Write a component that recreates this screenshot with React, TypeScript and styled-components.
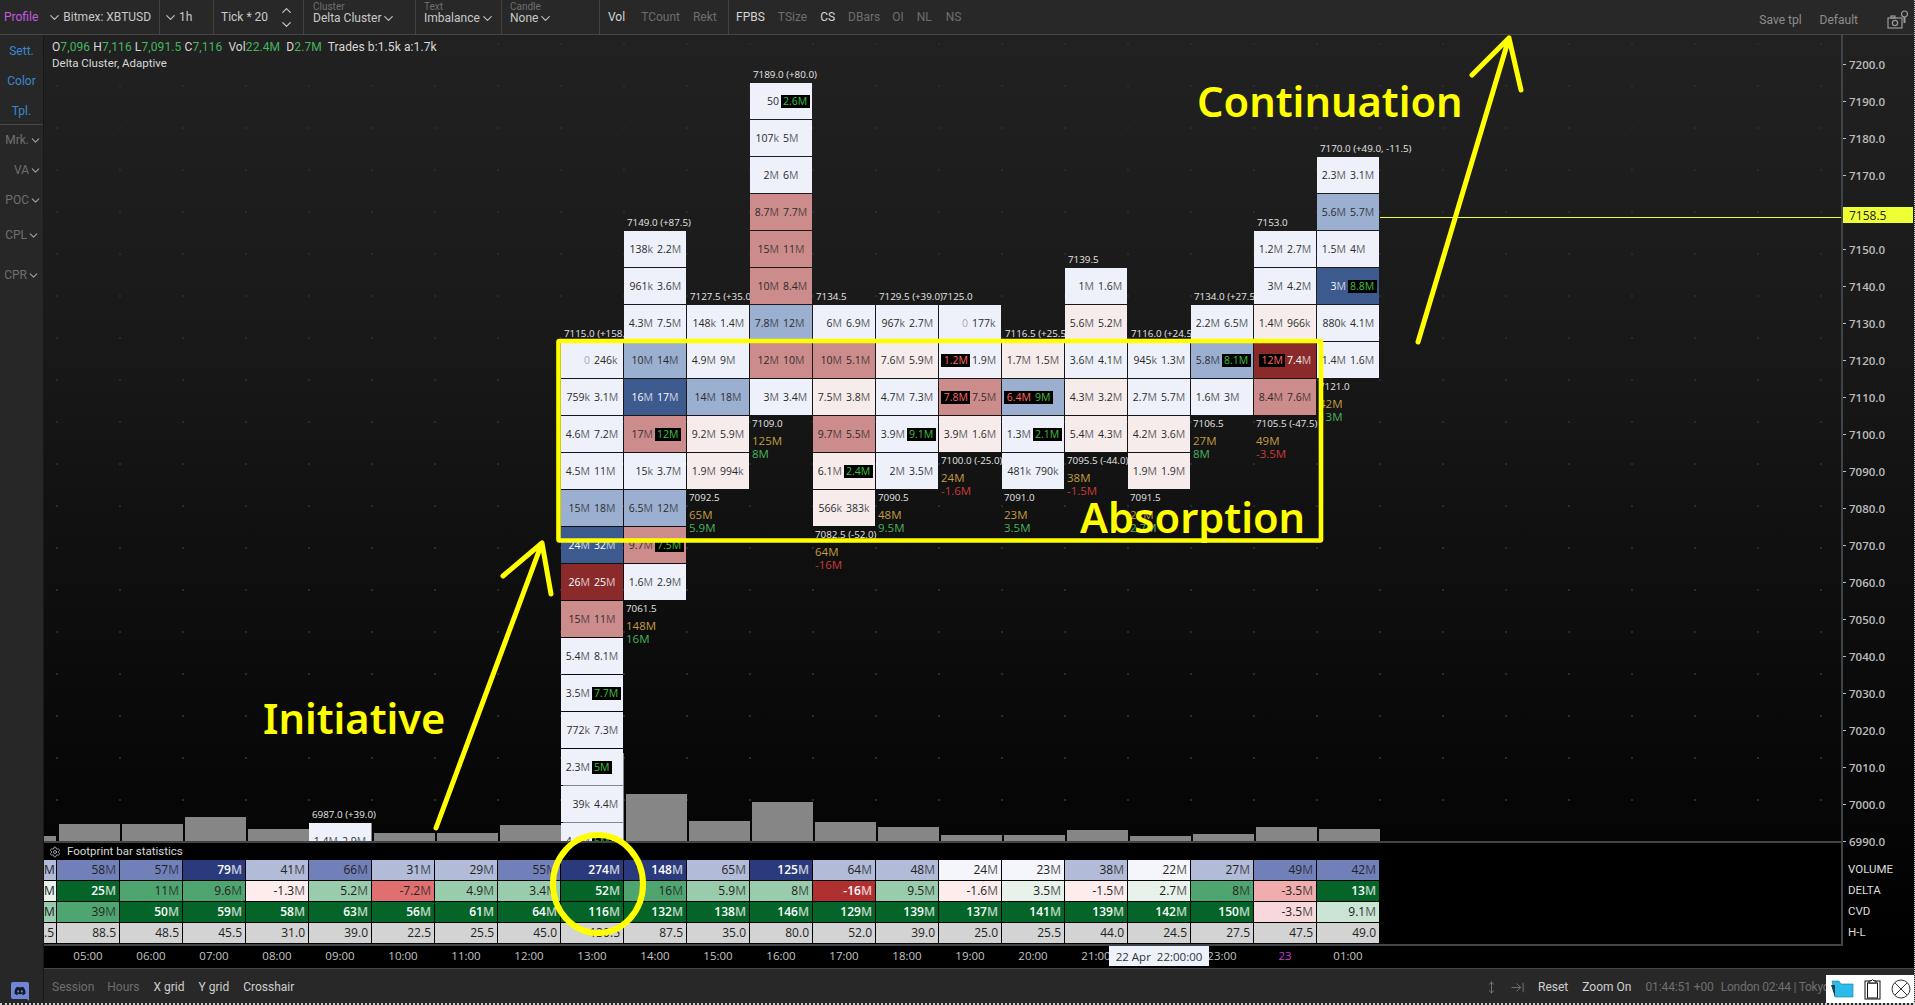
import React from "react";
import styled, { createGlobalStyle } from "styled-components";
import { ChevronDown, ChevronUp, Settings, MoveVertical, ArrowRightToLine } from "lucide-react";
import { FaDiscord } from "react-icons/fa";

const Global = createGlobalStyle`
  html, body { margin: 0; padding: 0; background: #000; }
  * { box-sizing: border-box; }
  #root { width: 1915px; height: 1005px; overflow: hidden; }
`;

const UI = `Roboto, "Liberation Sans", sans-serif`;
const CELL = `"Open Sans", "Noto Sans", sans-serif`;
const LINE = "#3e4448";

const Page = styled.div`
  position: relative;
  width: 1915px;
  height: 1005px;
  display: grid;
  grid-template-columns: 44px 1fr;
  grid-template-rows: 35px 933px 35px;
  border-right: 1px dotted #cfcfcf;
  border-bottom: 2px dotted #cfcfcf;
  background: #272727;
  font-family: ${UI};
  overflow: hidden;
`;

/* ---------- top bar ---------- */
const TopBar = styled.header`
  grid-column: 1 / 3;
  display: flex;
  background: #282828;
  border-bottom: 1px solid #474747;
  font-size: 12px;
  color: #c9c9c9;
`;
const Group = styled.div<{ $w: number; $gap?: number; $pad?: number; $plain?: boolean }>`
  width: ${(p) => p.$w}px;
  flex: none;
  display: flex;
  align-items: center;
  gap: ${(p) => p.$gap ?? 0}px;
  padding-left: ${(p) => p.$pad ?? 0}px;
  border-right: 1px solid ${(p) => (p.$plain ? "transparent" : "#424242")};
`;
const Profile = styled.span`
  color: #c65be0;
  margin-right: 9px;
`;
const DropMark = styled(ChevronDown)`
  flex: none;
  width: 15px;
  height: 15px;
  stroke-width: 1.9;
  color: #bdbdbd;
`;
const Spaced = styled.span`
  margin-left: 1px;
`;
const Stepper = styled.div`
  display: flex;
  flex-direction: column;
  margin-left: 11px;
  gap: 0;
  color: #c9c9c9;
  & > svg { margin: -0.5px 0; }
`;
const Stack = styled.div`
  display: flex;
  flex-direction: column;
  align-self: flex-start;
  padding-top: 3px;
`;
const StackCaption = styled.span`
  font-size: 10px;
  line-height: 8px;
  color: #6f6f6f;
`;
const StackValue = styled.span`
  display: flex;
  align-items: center;
  line-height: 13px;
`;
const Toggle = styled.span<{ $on?: boolean; $gap?: number }>`
  color: ${(p) => (p.$on ? "#d5d5d5" : "#6e6e6e")};
  margin-right: ${(p) => p.$gap ?? 0}px;
`;
const BarRight = styled.div`
  margin-left: auto;
  display: flex;
  align-items: center;
  padding: 6px 5px 0 0;
  color: #8d8d8d;
`;
const SaveTpl = styled.span`
  margin-right: 18px;
`;
const DefaultTpl = styled.span`
  margin-right: 29px;
`;

/* ---------- side bar ---------- */
const SideBar = styled.aside`
  grid-row: 2 / 4;
  display: flex;
  flex-direction: column;
  align-items: stretch;
  position: relative;
  padding-top: 1px;
  background: #272727;
  border-right: 1px solid #171717;
  font-size: 12px;
`;
const SideBlue = styled.div`
  height: 30px;
  line-height: 30px;
  text-align: center;
  color: #3b88d4;
`;
const SideRule = styled.div`
  height: 1px;
  background: #474747;
  margin-top: -2px;
`;
const SideMenu = styled.div<{ $h: number; $pr?: number }>`
  height: ${(p) => p.$h}px;
  display: flex;
  align-items: center;
  justify-content: flex-end;
  padding-right: ${(p) => p.$pr ?? 0}px;
  color: #6f6f6f;
`;
const SmallDrop = styled(ChevronDown)`
  width: 13px;
  height: 13px;
  stroke-width: 2;
  color: #a0a0a0;
`;
const DiscordTile = styled.div`
  position: absolute;
  left: 11px;
  bottom: 4px;
  width: 18px;
  height: 17px;
  border-radius: 2px;
  background: #6f86d6;
  display: flex;
  align-items: center;
  justify-content: center;
  color: #141820;
  &::after {
    content: "";
    position: absolute;
    right: 0;
    bottom: -2px;
    border-top: 3px solid #6f86d6;
    border-left: 3px solid transparent;
  }
`;

/* ---------- workspace ---------- */
const Workspace = styled.main`
  display: flex;
  flex-direction: column;
  background: #000;
  min-width: 0;
`;
const MainRow = styled.div`
  display: flex;
  height: 911px;
  background: linear-gradient(#212121 0%, #1a1a1a 30%, #101010 56%, #050505 88%, #000 100%);
`;
const PlotColumn = styled.div`
  width: 1799px;
  flex: none;
  display: flex;
  flex-direction: column;
  border-right: 2px solid ${LINE};
  border-bottom: 2px solid ${LINE};
`;
const Plot = styled.div`
  position: relative;
  height: 806px;
  overflow: hidden;
  background-image: radial-gradient(circle at 1px 1px, #2b2b2b 0, #2b2b2b 1px, transparent 1.2px);
  background-size: 63px 42px;
  background-position: 12px 8px;
`;
const Legend = styled.div`
  position: absolute;
  left: 8px;
  top: 4px;
  z-index: 3;
  color: #d8d8d8;
`;
const LegendLine = styled.div`
  font-size: 12px;
  line-height: 16px;
  letter-spacing: 0.1px;
  white-space: pre;
`;
const Up = styled.span`
  color: #46b35f;
`;
const LegendSub = styled.div`
  font-size: 11.5px;
  line-height: 16px;
`;
const VolumeLayer = styled.div`
  position: absolute;
  left: 0;
  bottom: 0;
  display: flex;
  align-items: flex-end;
  gap: 2px;
`;
const VolumeBar = styled.div<{ $h: number; $w?: number }>`
  width: ${(p) => p.$w ?? 61}px;
  height: ${(p) => p.$h}px;
  background: #868686;
  flex: none;
  margin-right: ${(p) => (p.$w ? 1 : 0)}px;
`;
const Foot = styled.div`
  position: relative;
  display: grid;
  grid-template-columns: repeat(22, 63px);
  grid-template-rows: repeat(22, 37px);
  padding: 11px 0 0 13px;
  font-family: ${CELL};
`;
const TONES: Record<string, { bg: string; fg: string }> = {
  w: { bg: "#eef1f9", fg: "#2a2a2a" },
  p: { bg: "#f7ecec", fg: "#2a2a2a" },
  r: { bg: "#cd8c8c", fg: "#2a2a2a" },
  b: { bg: "#9bafd1", fg: "#2a2a2a" },
  B: { bg: "#3d5a8e", fg: "#ffffff" },
  R: { bg: "#8a2a2a", fg: "#ffffff" },
};
const Cell = styled.div<{ $c: number; $r: number; $t: string }>`
  grid-column: ${(p) => p.$c};
  grid-row: ${(p) => p.$r};
  width: 62px;
  height: 36px;
  display: grid;
  grid-template-columns: 1fr 1fr;
  column-gap: 2px;
  align-items: center;
  background: ${(p) => TONES[p.$t].bg};
  color: ${(p) => TONES[p.$t].fg};
  font-size: 10.5px;
  white-space: nowrap;
`;
const SideL = styled.div`
  justify-self: end;
  display: flex;
`;
const SideR = styled.div`
  justify-self: start;
  display: flex;
`;
const Plain = styled.span<{ $zero?: boolean }>`
  padding: 0 1px;
  color: ${(p) => (p.$zero ? "#a9a9a9" : "inherit")};
`;
const Imb = styled.span<{ $red?: boolean }>`
  background: #000;
  color: ${(p) => (p.$red ? "#ff6a62" : "#3fc13f")};
  line-height: 13px;
  margin: 0 -1px;
  padding: ${(p) => (p.$red ? "0 2px 0 3px" : "0 3px 0 2px")};
`;
const TopLabel = styled.div<{ $c: number; $r: number }>`
  grid-column: ${(p) => p.$c};
  grid-row: ${(p) => p.$r};
  align-self: end;
  min-width: 0;
  padding: 0 0 1px 3px;
  color: #e6e6e6;
  font-size: 9.8px;
  line-height: 15px;
  white-space: nowrap;
`;
const FootStat = styled.div<{ $c: number; $r: number }>`
  grid-column: ${(p) => p.$c};
  grid-row: ${(p) => p.$r} / span 2;
  min-width: 0;
  padding-left: 2px;
  white-space: nowrap;
`;
const FootPrice = styled.div`
  color: #e6e6e6;
  font-size: 9.8px;
  line-height: 15px;
  margin-bottom: 3px;
`;
const FootVol = styled.div`
  color: #c29c3e;
  font-size: 11.5px;
  line-height: 13px;
`;
const FootDelta = styled.div<{ $neg: boolean }>`
  color: ${(p) => (p.$neg ? "#c93a3a" : "#47b35d")};
  font-size: 11.5px;
  line-height: 13px;
`;
const PriceLine = styled.div`
  position: absolute;
  left: 1336px;
  right: 0;
  top: 182px;
  height: 1px;
  background: #eeff33;
`;

/* ---------- statistics ---------- */
const StatsHeader = styled.div`
  height: 17px;
  border-top: 2px solid ${LINE};
  box-sizing: content-box;
  background: #000;
  display: flex;
  align-items: center;
  gap: 6px;
  padding-left: 5px;
  color: #d8d8d8;
  font-size: 11.5px;
`;
const StatsHeaderInner = styled.span`
  line-height: 15px;
`;
const Gear = styled(Settings)`
  width: 12px;
  height: 12px;
  stroke-width: 1.6;
  color: #c0c0c0;
`;
const StatsTable = styled.div`
  height: 84px;
  background: #000;
  display: grid;
  grid-template-columns: 12px repeat(21, 62px);
  grid-template-rows: repeat(4, 20px);
  gap: 1px;
  grid-auto-flow: column;
  font-family: ${CELL};
  font-size: 12px;
`;
const STAT: Record<string, { bg: string; fg: string }> = {
  a: { bg: "#f5f6fb", fg: "#222" },
  b: { bg: "#b2bbd8", fg: "#222" },
  c: { bg: "#7180b9", fg: "#222" },
  d: { bg: "#2a3a7c", fg: "#fff" },
  e: { bg: "#e6f2ea", fg: "#222" },
  f: { bg: "#cbe5d5", fg: "#222" },
  g: { bg: "#99ccac", fg: "#222" },
  h: { bg: "#4fa56f", fg: "#222" },
  i: { bg: "#056529", fg: "#fff" },
  j: { bg: "#fcecec", fg: "#222" },
  k: { bg: "#f7d9dc", fg: "#222" },
  l: { bg: "#f0adad", fg: "#222" },
  m: { bg: "#e07070", fg: "#222" },
  n: { bg: "#b03030", fg: "#fff" },
  z: { bg: "#d3d3d3", fg: "#222" },
};
const StatCell = styled.div<{ $k: string }>`
  background: ${(p) => STAT[p.$k].bg};
  color: ${(p) => STAT[p.$k].fg};
  font-weight: ${(p) => (STAT[p.$k].fg === "#fff" ? 600 : 400)};
  text-align: right;
  padding-right: 3px;
  line-height: 20px;
  overflow: hidden;
  white-space: nowrap;
`;
const Unit = styled.span`
  opacity: 0.72;
`;

/* ---------- axis ---------- */
const Axis = styled.div`
  flex: 1;
  position: relative;
  display: flex;
  flex-direction: column;
  color: #bcbcbc;
`;
const Ticks = styled.div`
  padding-top: 11px;
  height: 825px;
  flex: none;
`;
const Tick = styled.div`
  height: 37px;
  display: flex;
  align-items: center;
  gap: 3px;
  font-family: ${CELL};
  font-size: 11.5px;
  font-weight: 600;
  &::before {
    content: "";
    width: 3px;
    height: 1px;
    background: #bcbcbc;
  }
`;
const Badge = styled.div`
  position: absolute;
  left: 0;
  right: 1px;
  top: 172px;
  height: 16px;
  display: flex;
  align-items: center;
  padding-left: 6px;
  background: #eeff33;
  color: #222;
  font-family: ${CELL};
  font-size: 12px;
`;
const AxisStat = styled.div`
  height: 21px;
  line-height: 19px;
  padding-left: 5px;
  color: #dcdcdc;
  font-size: 11.5px;
`;

/* ---------- time row and footer ---------- */
const TimeRow = styled.div`
  position: relative;
  height: 22px;
  display: grid;
  grid-template-columns: repeat(22, 63px);
  padding-left: 13px;
  background: #000;
  font-family: ${CELL};
  font-size: 11.5px;
  line-height: 20px;
  color: #c4c4c4;
  text-align: center;
`;
const TimeLabel = styled.span<{ $day?: boolean }>`
  width: 62px;
  color: ${(p) => (p.$day ? "#c03fd6" : "inherit")};
`;
const Crosshair = styled.div`
  position: absolute;
  left: 1065px;
  top: 0;
  width: 100px;
  height: 20px;
  background: #edf2fb;
  color: #333;
  line-height: 21px;
  white-space: pre;
`;
const Footer = styled.footer`
  position: relative;
  display: flex;
  align-items: center;
  padding: 2px 0 0 8px;
  background: #282828;
  border-top: 1px solid #454545;
  font-size: 12px;
  color: #cfcfcf;
`;
const FooterToggle = styled.span<{ $off?: boolean; $gap: number }>`
  margin-right: ${(p) => p.$gap}px;
  color: ${(p) => (p.$off ? "#6e6e6e" : "#cfcfcf")};
`;
const FooterRight = styled.div`
  position: absolute;
  left: 1441px;
  top: 1px;
  height: 100%;
  display: flex;
  align-items: center;
  white-space: nowrap;
`;
const FootIconUp = styled(MoveVertical)`
  width: 13px;
  height: 17px;
  stroke-width: 1.4;
  color: #8c8c8c;
  margin-right: 12px;
`;
const FootIconEnd = styled(ArrowRightToLine)`
  width: 15px;
  height: 15px;
  stroke-width: 1.4;
  color: #7a7a7a;
  margin-right: 13px;
`;
const FootClock = styled.span`
  color: #6f6f6f;
  margin-right: 7px;
  letter-spacing: -0.1px;
`;
const FootWorld = styled.span`
  color: #6f6f6f;
  letter-spacing: -0.25px;
`;
const Gap = styled.span<{ $w: number }>`
  margin-right: ${(p) => p.$w}px;
`;
const Tray = styled.div`
  position: absolute;
  right: 0;
  top: 6px;
  bottom: -2px;
  width: 88px;
  background: #fff;
  display: flex;
  align-items: center;
  padding: 0 3px 2px 4px;
  justify-content: space-between;
`;

/* ---------- annotations ---------- */
const Marks = styled.svg`
  position: absolute;
  left: 0;
  top: 0;
  width: 1915px;
  height: 1005px;
  pointer-events: none;
  z-index: 5;
`;
const Note = styled.div<{ $x: number; $y: number }>`
  position: absolute;
  left: ${(p) => p.$x}px;
  top: ${(p) => p.$y}px;
  z-index: 6;
  color: #ffff00;
  font-family: "Noto Sans", "Open Sans", sans-serif;
  font-weight: 600;
  font-size: 41.6px;
  line-height: 50px;
  white-space: nowrap;
`;

/* ---------- data ---------- */
type Col = { c: number; top: number; label: string; cells: string[]; foot?: [string, string, string] };
const COLS: Col[] = [
  { c: -4, top: 21, label: "6987.0 (+39.0)", cells: ["1.4M 2.9M|w"] },
  { c: 0, top: 8, label: "7115.0 (+158.5)", cells: ["0 246k|w", "759k 3.1M|w", "4.6M 7.2M|w", "4.5M 11M|w", "15M 18M|b", "24M 32M|B", "26M 25M|R", "15M 11M|r", "5.4M 8.1M|w", "3.5M !7.7M|w", "772k 7.3M|w", "2.3M !5M|w", "39k 4.4M|w", "4.1M !6M|w"] },
  { c: 1, top: 5, label: "7149.0 (+87.5)", cells: ["138k 2.2M|w", "961k 3.6M|w", "4.3M 7.5M|w", "10M 14M|b", "16M 17M|B", "17M !12M|r", "15k 3.7M|w", "6.5M 12M|b", "9.7M !7.5M|r", "1.6M 2.9M|w"], foot: ["7061.5", "148M", "16M"] },
  { c: 2, top: 7, label: "7127.5 (+35.0)", cells: ["148k 1.4M|w", "4.9M 9M|w", "14M 18M|b", "9.2M 5.9M|p", "1.9M 994k|p"], foot: ["7092.5", "65M", "5.9M"] },
  { c: 3, top: 1, label: "7189.0 (+80.0)", cells: ["50 !2.6M|w", "107k 5M|w", "2M 6M|w", "8.7M 7.7M|r", "15M 11M|r", "10M 8.4M|r", "7.8M 12M|b", "12M 10M|r", "3M 3.4M|w"], foot: ["7109.0", "125M", "8M"] },
  { c: 4, top: 7, label: "7134.5", cells: ["6M 6.9M|w", "10M 5.1M|r", "7.5M 3.8M|p", "9.7M 5.5M|r", "6.1M !2.4M|p", "566k 383k|p"], foot: ["7082.5 (-52.0)", "64M", "-16M"] },
  { c: 5, top: 7, label: "7129.5 (+39.0)", cells: ["967k 2.7M|w", "7.6M 5.9M|p", "4.7M 7.3M|w", "3.9M !9.1M|w", "2M 3.5M|w"], foot: ["7090.5", "48M", "9.5M"] },
  { c: 6, top: 7, label: "7125.0", cells: ["0 177k|w", "!1.2M 1.9M|w", "!7.8M 7.5M|r", "3.9M 1.6M|p"], foot: ["7100.0 (-25.0)", "24M", "-1.6M"] },
  { c: 7, top: 8, label: "7116.5 (+25.5)", cells: ["1.7M 1.5M|p", "!6.4M !9M|b", "1.3M !2.1M|w", "481k 790k|w"], foot: ["7091.0", "23M", "3.5M"] },
  { c: 8, top: 6, label: "7139.5", cells: ["1M 1.6M|w", "5.6M 5.2M|p", "3.6M 4.1M|w", "4.3M 3.2M|p", "5.4M 4.3M|p"], foot: ["7095.5 (-44.0)", "38M", "-1.5M"] },
  { c: 9, top: 8, label: "7116.0 (+24.5)", cells: ["945k 1.3M|w", "2.7M 5.7M|w", "4.2M 3.6M|p", "1.9M 1.9M|p"], foot: ["7091.5", "22M", "2.7M"] },
  { c: 10, top: 7, label: "7134.0 (+27.5)", cells: ["2.2M 6.5M|w", "5.8M !8.1M|b", "1.6M 3M|w"], foot: ["7106.5", "27M", "8M"] },
  { c: 11, top: 5, label: "7153.0", cells: ["1.2M 2.7M|w", "3M 4.2M|w", "1.4M 966k|p", "!12M 7.4M|R", "8.4M 7.6M|r"], foot: ["7105.5 (-47.5)", "49M", "-3.5M"] },
  { c: 12, top: 3, label: "7170.0 (+49.0, -11.5)", cells: ["2.3M 3.1M|w", "5.6M 5.7M|b", "1.5M 4M|w", "3M !8.8M|B", "880k 4.1M|w", "1.4M 1.6M|w"], foot: ["7121.0", "42M", "13M"] },
];
const BARS = [17, 17, 24, 12, 18, 8, 8, 16, 88, 47, 20, 39, 19, 14, 6, 6, 11, 5, 7, 14, 12];
const STATS: [string, string, string, string, string, string, string, string][] = [
  ["58M", "c", "25M", "i", "39M", "h", "88.5", "z"],
  ["57M", "c", "11M", "h", "50M", "i", "48.5", "z"],
  ["79M", "d", "9.6M", "h", "59M", "i", "45.5", "z"],
  ["41M", "b", "-1.3M", "j", "58M", "i", "31.0", "z"],
  ["66M", "c", "5.2M", "g", "63M", "i", "39.0", "z"],
  ["31M", "b", "-7.2M", "m", "56M", "i", "22.5", "z"],
  ["29M", "b", "4.9M", "g", "61M", "i", "25.5", "z"],
  ["55M", "c", "3.4M", "g", "64M", "i", "45.0", "z"],
  ["274M", "d", "52M", "i", "116M", "i", "130.5", "z"],
  ["148M", "d", "16M", "h", "132M", "i", "87.5", "z"],
  ["65M", "b", "5.9M", "g", "138M", "i", "35.0", "z"],
  ["125M", "d", "8M", "g", "146M", "i", "80.0", "z"],
  ["64M", "b", "-16M", "n", "129M", "i", "52.0", "z"],
  ["48M", "b", "9.5M", "g", "139M", "i", "39.0", "z"],
  ["24M", "a", "-1.6M", "j", "137M", "i", "25.0", "z"],
  ["23M", "a", "3.5M", "e", "141M", "i", "25.5", "z"],
  ["38M", "b", "-1.5M", "j", "139M", "i", "44.0", "z"],
  ["22M", "a", "2.7M", "e", "142M", "i", "24.5", "z"],
  ["27M", "b", "8M", "h", "150M", "i", "27.5", "z"],
  ["49M", "c", "-3.5M", "l", "-3.5M", "k", "47.5", "z"],
  ["42M", "c", "13M", "i", "9.1M", "f", "49.0", "z"],
];
const TIMES = ["05:00", "06:00", "07:00", "08:00", "09:00", "10:00", "11:00", "12:00", "13:00", "14:00", "15:00", "16:00", "17:00", "18:00", "19:00", "20:00", "21:00", "", "23:00", "23", "01:00"];
const PRICES = Array.from({ length: 22 }, (_, i) => (7200 - i * 10).toFixed(1));

const Amount = ({ v }: { v: string }) => {
  const m = v.match(/^(.*?)([Mk])$/);
  if (!m) return <>{v}</>;
  return (
    <>
      {m[1]}
      <Unit>{m[2]}</Unit>
    </>
  );
};

const CellText = ({ v, red }: { v: string; red: boolean }) => {
  if (v.startsWith("!")) {
    return <Imb $red={red}>{v.slice(1)}</Imb>;
  }
  return (
    <Plain $zero={v === "0"}>
      <Amount v={v} />
    </Plain>
  );
};

const FootCol = ({ col }: { col: Col }) => {
  const gc = col.c + 9;
  return (
    <>
      <TopLabel $c={gc} $r={col.top}>{col.label}</TopLabel>
      {col.cells.map((s, i) => {
        const [text, tone] = s.split("|");
        const [l, r] = text.split(" ");
        return (
          <Cell key={i} $c={gc} $r={col.top + i + 1} $t={tone}>
            <SideL><CellText v={l} red /></SideL>
            <SideR><CellText v={r} red={false} /></SideR>
          </Cell>
        );
      })}
      {col.foot && (
        <FootStat $c={gc} $r={col.top + col.cells.length + 1}>
          <FootPrice>{col.foot[0]}</FootPrice>
          <FootVol>{col.foot[1]}</FootVol>
          <FootDelta $neg={col.foot[2].startsWith("-")}>{col.foot[2]}</FootDelta>
        </FootStat>
      )}
    </>
  );
};

const Camera = () => (
  <svg width="22" height="20" viewBox="0 0 22 20" fill="none" stroke="#9a9a9a" strokeWidth="1.2">
    <rect x="1" y="8" width="14" height="10" />
    <rect x="4" y="6" width="4" height="2" />
    <circle cx="8" cy="13" r="2.6" />
    <circle cx="17.5" cy="4" r="3" />
    <line x1="17.5" y1="7" x2="17.5" y2="13" strokeWidth="2" />
  </svg>
);

export default function App() {
  return (
    <>
      <Global />
      <Page>
        <TopBar>
          <Group $w={160} $pad={4}>
            <Profile>Profile</Profile>
            <DropMark />
            <Spaced>Bitmex: XBTUSD</Spaced>
          </Group>
          <Group $w={54} $pad={3}>
            <DropMark />
            <Spaced>1h</Spaced>
          </Group>
          <Group $w={90} $pad={7}>
            <span>Tick * 20</span>
            <Stepper>
              <ChevronUp size={15} strokeWidth={1.9} />
              <ChevronDown size={15} strokeWidth={1.9} />
            </Stepper>
          </Group>
          <Group $w={112} $pad={9}>
            <Stack>
              <StackCaption>Cluster</StackCaption>
              <StackValue>Delta Cluster<DropMark /></StackValue>
            </Stack>
          </Group>
          <Group $w={86} $pad={8}>
            <Stack>
              <StackCaption>Text</StackCaption>
              <StackValue>Imbalance<DropMark /></StackValue>
            </Stack>
          </Group>
          <Group $w={98} $pad={8}>
            <Stack>
              <StackCaption>Candle</StackCaption>
              <StackValue>None<DropMark /></StackValue>
            </Stack>
          </Group>
          <Group $w={129} $pad={8}>
            <Toggle $on $gap={16}>Vol</Toggle>
            <Toggle $gap={13}>TCount</Toggle>
            <Toggle>Rekt</Toggle>
          </Group>
          <Group $w={240} $pad={7} $plain>
            <Toggle $on $gap={13}>FPBS</Toggle>
            <Toggle $gap={13}>TSize</Toggle>
            <Toggle $on $gap={13}>CS</Toggle>
            <Toggle $gap={12}>DBars</Toggle>
            <Toggle $gap={13}>OI</Toggle>
            <Toggle $gap={14}>NL</Toggle>
            <Toggle>NS</Toggle>
          </Group>
          <BarRight>
            <SaveTpl>Save tpl</SaveTpl>
            <DefaultTpl>Default</DefaultTpl>
            <Camera />
          </BarRight>
        </TopBar>

        <SideBar>
          <SideBlue>Sett.</SideBlue>
          <SideBlue>Color</SideBlue>
          <SideBlue>Tpl.</SideBlue>
          <SideRule />
          <SideMenu $h={30} $pr={1}>Mrk.<SmallDrop /></SideMenu>
          <SideMenu $h={30} $pr={1}>VA<SmallDrop /></SideMenu>
          <SideMenu $h={30} $pr={1}>POC<SmallDrop /></SideMenu>
          <SideMenu $h={40} $pr={3}>CPL<SmallDrop /></SideMenu>
          <SideMenu $h={40} $pr={3}>CPR<SmallDrop /></SideMenu>
          <DiscordTile><FaDiscord size={12} /></DiscordTile>
        </SideBar>

        <Workspace>
          <MainRow>
            <PlotColumn>
              <Plot>
                <VolumeLayer>
                  <VolumeBar $h={5} $w={12} />
                  {BARS.map((h, i) => <VolumeBar key={i} $h={h} />)}
                </VolumeLayer>
                <Foot>
                  {COLS.map((col) => <FootCol key={col.c} col={col} />)}
                </Foot>
                <PriceLine />
                <Legend>
                  <LegendLine>
                    O<Up>7,096</Up> H<Up>7,116</Up> L<Up>7,091.5</Up> C<Up>7,116</Up>  Vol<Up>22.4M</Up>  D<Up>2.7M</Up>  Trades b:1.5k a:1.7k
                  </LegendLine>
                  <LegendSub>Delta Cluster, Adaptive</LegendSub>
                </Legend>
              </Plot>
              <StatsHeader>
                <Gear />
                <StatsHeaderInner>Footprint bar statistics</StatsHeaderInner>
              </StatsHeader>
              <StatsTable>
                <StatCell $k="b">M</StatCell>
                <StatCell $k="e">M</StatCell>
                <StatCell $k="g">M</StatCell>
                <StatCell $k="z">.5</StatCell>
                {STATS.map((s, i) => (
                  <React.Fragment key={i}>
                    <StatCell $k={s[1]}><Amount v={s[0]} /></StatCell>
                    <StatCell $k={s[3]}><Amount v={s[2]} /></StatCell>
                    <StatCell $k={s[5]}><Amount v={s[4]} /></StatCell>
                    <StatCell $k={s[7]}>{s[6]}</StatCell>
                  </React.Fragment>
                ))}
              </StatsTable>
            </PlotColumn>
            <Axis>
              <Ticks>
                {PRICES.map((p) => <Tick key={p}>{p}</Tick>)}
              </Ticks>
              <AxisStat>VOLUME</AxisStat>
              <AxisStat>DELTA</AxisStat>
              <AxisStat>CVD</AxisStat>
              <AxisStat>H-L</AxisStat>
              <Badge>7158.5</Badge>
            </Axis>
          </MainRow>
          <TimeRow>
            {TIMES.map((t, i) => <TimeLabel key={i} $day={t === "23"}>{t}</TimeLabel>)}
            <Crosshair>22 Apr  22:00:00</Crosshair>
          </TimeRow>
        </Workspace>

        <Footer>
          <FooterToggle $off $gap={13}>Session</FooterToggle>
          <FooterToggle $off $gap={14}>Hours</FooterToggle>
          <FooterToggle $gap={14}>X grid</FooterToggle>
          <FooterToggle $gap={14}>Y grid</FooterToggle>
          <FooterToggle $gap={0}>Crosshair</FooterToggle>
          <FooterRight>
            <FootIconUp />
            <FootIconEnd />
            <Gap $w={14}>Reset</Gap>
            <Gap $w={14}>Zoom On</Gap>
            <FootClock>01:44:51 +00</FootClock>
            <FootWorld>London 02:44 | Tokyo 11:44</FootWorld>
          </FooterRight>
          <Tray>
            <svg width="24" height="18" viewBox="0 0 24 18">
              <path d="M2 1 H9 L11 4 H23 V17 H5 Z" fill="#2cbcec" stroke="#167a9c" strokeWidth="0.6" />
              <path d="M1 5 L5 17 L5 5 Z" fill="#173d4c" />
            </svg>
            <svg width="17" height="22" viewBox="0 0 17 22" fill="#fff" stroke="#111" strokeWidth="1">
              <rect x="1" y="3" width="15" height="18" />
              <rect x="3.5" y="5" width="10" height="15" />
              <path d="M5 5 V3 H7 Q8.5 0 10 3 H12 V5 Z" />
            </svg>
            <svg width="20" height="20" viewBox="0 0 20 20" fill="none" stroke="#333" strokeWidth="1">
              <circle cx="10" cy="10" r="9" />
              <path d="M4 4 L16 16 M16 4 L4 16" />
            </svg>
          </Tray>
        </Footer>

        <Marks viewBox="0 0 1915 1005">
          <g fill="none" stroke="#ffff00" strokeLinecap="round" strokeLinejoin="round">
            <rect x="558.5" y="341" width="762.5" height="199.5" rx="1" strokeWidth="4.6" />
            <ellipse cx="598" cy="884" rx="45" ry="49" strokeWidth="6" />
            <path d="M436 828 L542 543 M503 576 L542 543 L551 594" strokeWidth="5" />
            <path d="M1418 342 L1509 38 M1472 75 L1509 38 L1521 90" strokeWidth="5" />
          </g>
        </Marks>
        <Note $x={1197} $y={76}>Continuation</Note>
        <Note $x={1080} $y={492}>Absorption</Note>
        <Note $x={263} $y={693}>Initiative</Note>
      </Page>
    </>
  );
}
